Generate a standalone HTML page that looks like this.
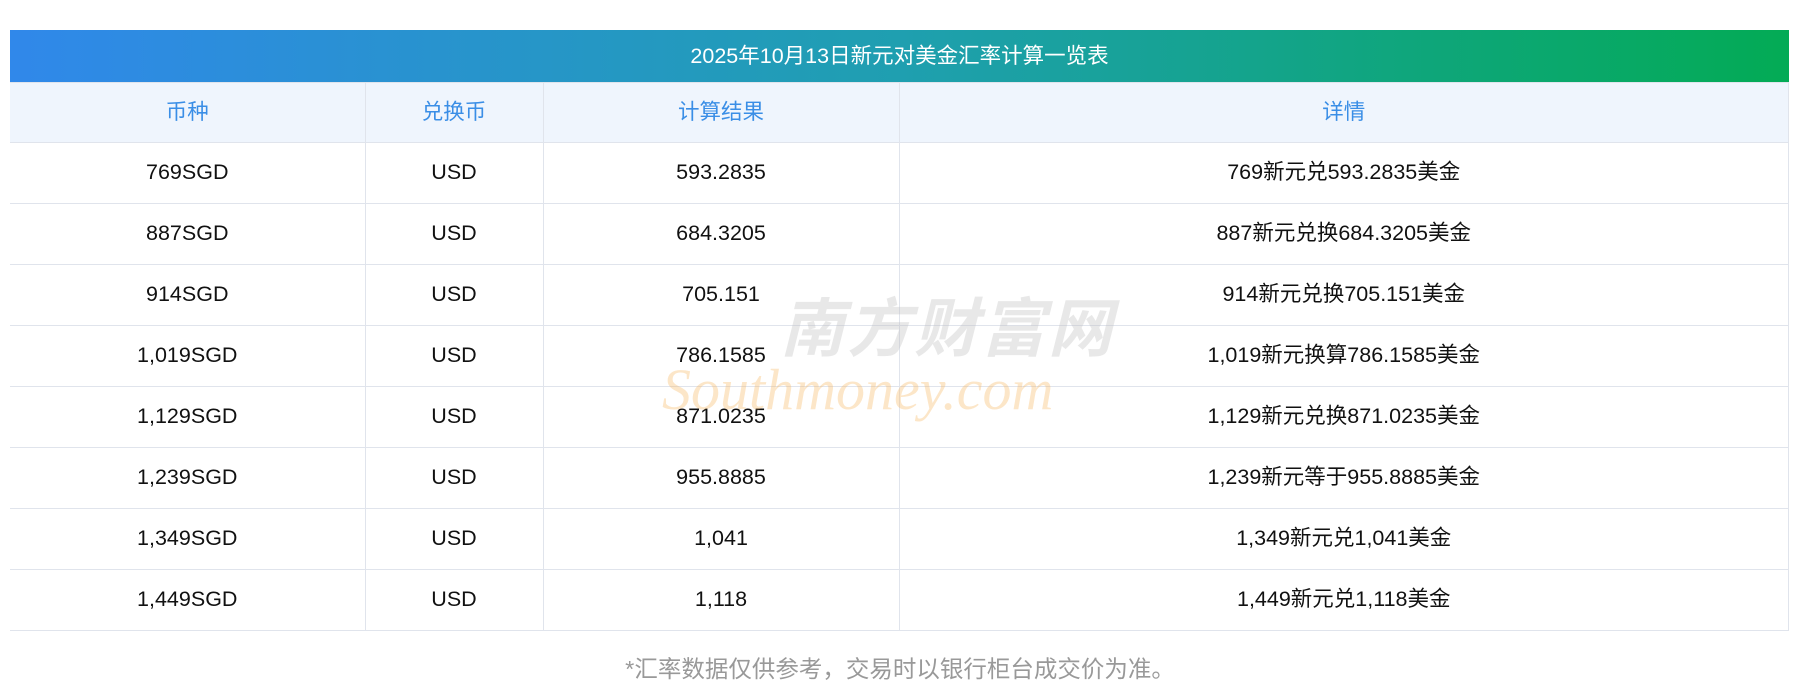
<!DOCTYPE html>
<html><head><meta charset="utf-8"><style>
body{margin:0;background:#fff;width:1800px;height:697px;position:relative;overflow:hidden;font-family:"Liberation Sans","Noto Sans CJK SC",sans-serif;}
.title{position:absolute;left:10px;top:30px;width:1779px;height:52px;background:linear-gradient(90deg,#3088ea,#1f9fb0 50%,#03ab55);color:#fff;font-size:21.5px;line-height:52px;text-align:center;}
table{position:absolute;left:10px;top:82px;width:1779px;border-collapse:collapse;table-layout:fixed;}
td,th{border:1px solid #e0e4ec;text-align:center;height:58px;padding:0 0 2px;font-size:21.5px;line-height:22px;color:#111;font-weight:normal;vertical-align:middle;}
th{background:#eff5fd;color:#3a8ee6;height:57px;}
tr>*:first-child{border-left:none}
.wm1{position:absolute;left:780px;top:292px;color:#bbb;opacity:.32;font-size:64px;font-weight:bold;font-style:italic;letter-spacing:3px;font-family:"Noto Sans CJK SC",sans-serif;line-height:64px;}
.wm2{position:absolute;left:662px;top:358px;color:#f7b864;opacity:.35;font-style:italic;font-family:"Liberation Serif",serif;font-size:58px;line-height:64px;}
.foot{position:absolute;top:650px;width:1800px;text-align:center;color:#999;font-size:23.5px;}
</style></head><body>
<div class="title">2025年10月13日新元对美金汇率计算一览表</div>
<table>
<colgroup><col style="width:355px"><col style="width:178px"><col style="width:356px"><col></colgroup>
<tr><th>币种</th><th>兑换币</th><th>计算结果</th><th>详情</th></tr>
<tr><td>769SGD</td><td>USD</td><td>593.2835</td><td>769新元兑593.2835美金</td></tr>
<tr><td>887SGD</td><td>USD</td><td>684.3205</td><td>887新元兑换684.3205美金</td></tr>
<tr><td>914SGD</td><td>USD</td><td>705.151</td><td>914新元兑换705.151美金</td></tr>
<tr><td>1,019SGD</td><td>USD</td><td>786.1585</td><td>1,019新元换算786.1585美金</td></tr>
<tr><td>1,129SGD</td><td>USD</td><td>871.0235</td><td>1,129新元兑换871.0235美金</td></tr>
<tr><td>1,239SGD</td><td>USD</td><td>955.8885</td><td>1,239新元等于955.8885美金</td></tr>
<tr><td>1,349SGD</td><td>USD</td><td>1,041</td><td>1,349新元兑1,041美金</td></tr>
<tr><td>1,449SGD</td><td>USD</td><td>1,118</td><td>1,449新元兑1,118美金</td></tr>
</table>
<div class="wm1">南方财富网</div>
<div class="wm2">Southmoney.com</div>
<div class="foot">*汇率数据仅供参考，交易时以银行柜台成交价为准。</div>
</body></html>
